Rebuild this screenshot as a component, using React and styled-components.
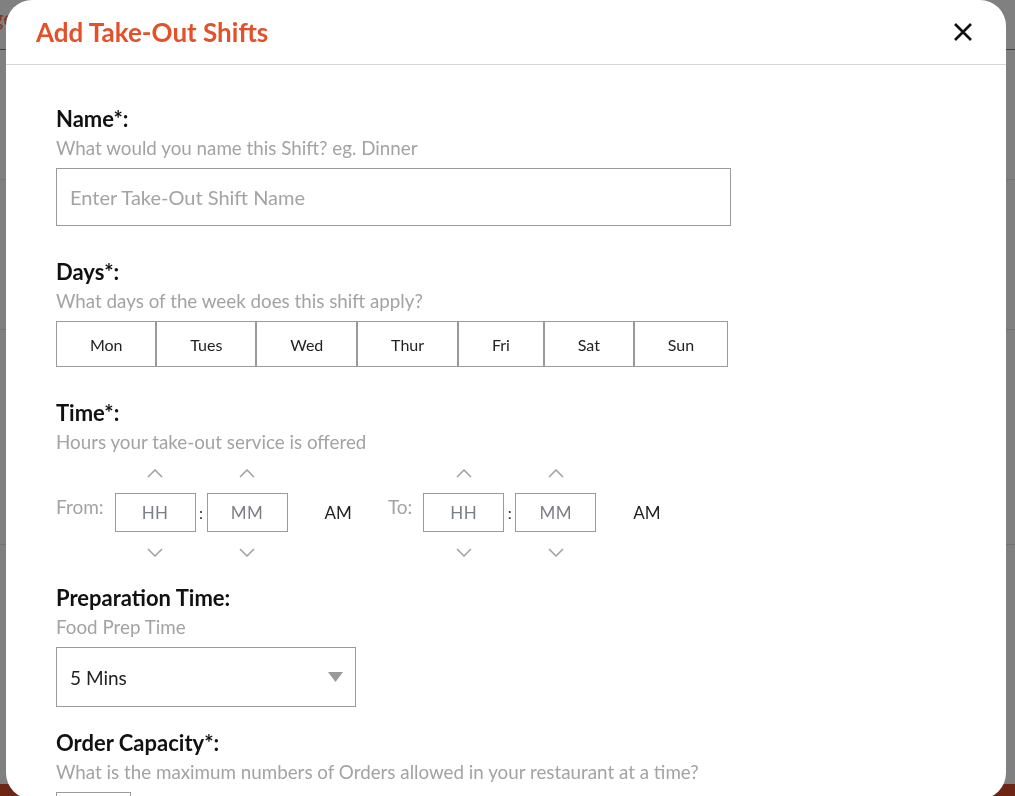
import styled, { createGlobalStyle } from "styled-components";

const GlobalStyle = createGlobalStyle`
  html, body {
    margin: 0;
    padding: 0;
    height: 100%;
    overflow: hidden;
    background: #808080;
    font-family: Lato, "Noto Sans", "Liberation Sans", sans-serif;
  }
  * { box-sizing: border-box; }
`;

const Page = styled.div`
  height: 796px;
  display: flex;
  flex-direction: column;
  background: #808080;
`;

const PageRow = styled.div`
  height: ${p => p.h}px;
  flex-shrink: 0;
  border-bottom: 1px solid ${p => p.line || "#747474"};
`;

const PageFooter = styled.div`
  flex: 1;
  display: flex;
  align-items: flex-end;
`;

const FooterBand = styled.div`
  width: 100%;
  height: 12px;
  background: #6d2515;
`;

const PageText = styled.span`
  display: block;
  padding: 4px 0 0 0;
  margin-left: -8px;
  font-size: 22px;
  color: #8a3520;
`;

const Modal = styled.div`
  position: fixed;
  top: 0;
  left: 6px;
  width: 1000px;
  height: 799px;
  background: #fff;
  border-radius: 26px;
  overflow: hidden;
  display: flex;
  flex-direction: column;
`;

const Header = styled.div`
  height: 65px;
  flex-shrink: 0;
  display: flex;
  align-items: center;
  justify-content: space-between;
  padding: 0 33px 0 30px;
  border-bottom: 1px solid #d8d8d8;
`;

const Title = styled.h2`
  margin: 0;
  font-size: 26px;
  font-weight: 700;
  color: #e4502a;
`;

const CloseButton = styled.button`
  border: none;
  background: none;
  padding: 0;
  width: 20px;
  height: 20px;
  display: flex;
  cursor: pointer;
`;

const Body = styled.div`
  padding: 42px 50px 0 50px;
  display: flex;
  flex-direction: column;
`;

const Section = styled.div`
  display: flex;
  flex-direction: column;
  margin-bottom: ${p => p.mb || 34}px;
`;

const Label = styled.div`
  font-size: 22px;
  line-height: 24px;
  font-weight: 700;
  color: #111;
`;

const Hint = styled.div`
  margin-top: 5px;
  font-size: 18.8px;
  line-height: 24px;
  color: #a3a3a3;
`;

const TextInput = styled.div`
  margin-top: 8px;
  width: ${p => p.w}px;
  height: ${p => p.h || 58}px;
  border: 1px solid #9a9a9a;
  display: flex;
  align-items: center;
  justify-content: space-between;
  padding: 0 12px 0 13px;
  font-size: ${p => (p.placeholder ? 20 : 19)}px;
  color: ${p => (p.placeholder ? "#a3a3a3" : "#222")};
`;

const DayRow = styled.div`
  margin-top: 8px;
  display: flex;
  width: 672px;
`;

const DayButton = styled.button`
  flex: 1 1 auto;
  height: 46px;
  border: 1px solid #9a9a9a;
  background: #fff;
  font-family: inherit;
  font-size: 16px;
  color: #222;
  padding: 0 20px;
`;

const TimeRow = styled.div`
  display: flex;
  align-items: center;
`;

const TimeLabel = styled.span`
  font-size: 19px;
  color: #a3a3a3;
  margin-right: ${p => p.gap}px;
`;

const Spinner = styled.div`
  display: flex;
  flex-direction: column;
  align-items: center;
`;

const Arrow = styled.button`
  border: none;
  background: none;
  padding: ${p => (p.up ? "0 0 15px" : "16px 0 0")};
  height: ${p => p.h}px;
  width: 100%;
  display: flex;
  justify-content: center;
  align-items: ${p => (p.up ? "flex-end" : "flex-start")};
`;

const TimeBox = styled.div`
  width: 81px;
  height: 39px;
  border: 1px solid #9a9a9a;
  display: flex;
  align-items: center;
  justify-content: center;
  font-size: 17px;
  color: #7a7f87;
  letter-spacing: 0.5px;
`;

const Colon = styled.span`
  width: 11px;
  margin-top: 12px;
  text-align: center;
  font-size: 16px;
  color: #333;
`;

const Meridiem = styled.span`
  margin-top: 12px;
  margin-left: 37px;
  margin-right: ${p => p.mr || 0}px;
  font-size: 17px;
  color: #222;
`;

const Chevron = ({ up }) => (
  <svg width="16" height="9" viewBox="0 0 16 9">
    <polyline
      points={up ? "1,8 8,1 15,8" : "1,1 8,8 15,1"}
      fill="none"
      stroke="#a0a0a0"
      strokeWidth="1.5"
    />
  </svg>
);

const TimeSpinner = ({ text }) => (
  <Spinner>
    <Arrow up h={39}>
      <Chevron up />
    </Arrow>
    <TimeBox>{text}</TimeBox>
    <Arrow h={27}>
      <Chevron />
    </Arrow>
  </Spinner>
);

const days = ["Mon", "Tues", "Wed", "Thur", "Fri", "Sat", "Sun"];

export default function App() {
  return (
    <>
      <GlobalStyle />
      <Page>
        <PageRow h={50} line="#7a2e1c">
          <PageText>ge</PageText>
        </PageRow>
        <PageRow h={130} />
        <PageRow h={150} />
        <PageRow h={215} />
        <PageFooter>
          <FooterBand />
        </PageFooter>
      </Page>
      <Modal>
        <Header>
          <Title>Add Take-Out Shifts</Title>
          <CloseButton aria-label="Close">
            <svg width="20" height="20" viewBox="0 0 20 20">
              <path d="M2 2 L18 18 M18 2 L2 18" stroke="#111" strokeWidth="2.6" />
            </svg>
          </CloseButton>
        </Header>
        <Body>
          <Section>
            <Label>Name*:</Label>
            <Hint>What would you name this Shift? eg. Dinner</Hint>
            <TextInput w={675} placeholder>Enter Take-Out Shift Name</TextInput>
          </Section>
          <Section>
            <Label>Days*:</Label>
            <Hint>What days of the week does this shift apply?</Hint>
            <DayRow>
              {days.map(d => (
                <DayButton key={d}>{d}</DayButton>
              ))}
            </DayRow>
          </Section>
          <Section mb={27}>
            <Label>Time*:</Label>
            <Hint>Hours your take-out service is offered</Hint>
            <TimeRow>
              <TimeLabel gap={11}>From:</TimeLabel>
              <TimeSpinner text="HH" />
              <Colon>:</Colon>
              <TimeSpinner text="MM" />
              <Meridiem mr={36}>AM</Meridiem>
              <TimeLabel gap={11}>To:</TimeLabel>
              <TimeSpinner text="HH" />
              <Colon>:</Colon>
              <TimeSpinner text="MM" />
              <Meridiem>AM</Meridiem>
            </TimeRow>
          </Section>
          <Section mb={24}>
            <Label>Preparation Time:</Label>
            <Hint>Food Prep Time</Hint>
            <TextInput w={300} h={60}>
              5 Mins
              <svg width="15" height="10" viewBox="0 0 15 10">
                <polygon points="0,0 15,0 7.5,10" fill="#9a9a9a" />
              </svg>
            </TextInput>
          </Section>
          <Section>
            <Label>Order Capacity*:</Label>
            <Hint>What is the maximum numbers of Orders allowed in your restaurant at a time?</Hint>
            <TextInput w={75} h={40} />
          </Section>
        </Body>
      </Modal>
    </>
  );
}
